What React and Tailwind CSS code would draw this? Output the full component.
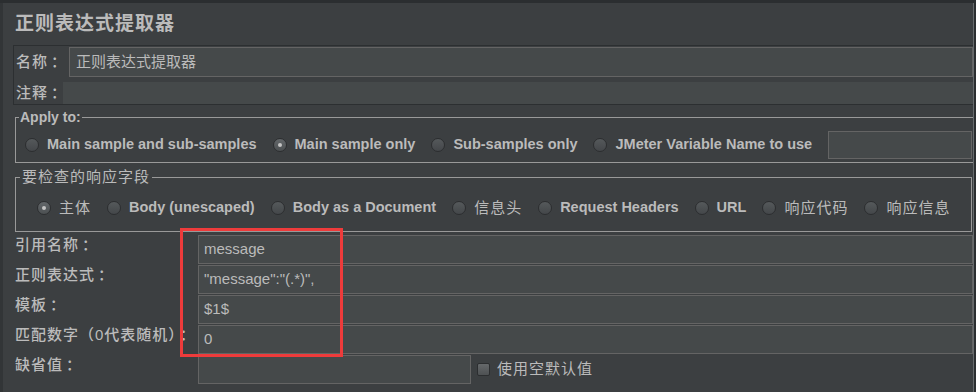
import React from "react";

const cjk = "font-['Liberation_Sans','Noto_Sans_CJK_SC',sans-serif]";

const Radio = ({ label, checked, cn }) => (
  <span className="flex items-center whitespace-nowrap">
    <span
      className={`flex items-center justify-center w-[14px] h-[14px] rounded-full border border-[#2c2e30] bg-gradient-to-b ${
        checked ? "from-[#63676a] to-[#4c5052]" : "from-[#55595b] to-[#44474a]"
      }`}
    >
      {checked && <span className="w-[4px] h-[4px] rounded-full bg-[#c4c4c4]" />}
    </span>
    <span className={`ml-[8px] ${cn ? "text-[15px] tracking-[1px] font-normal" : "text-[14.5px] font-bold"}`}>
      {label}
    </span>
  </span>
);

// label text with the full-width colon pushed right, like the Swing font does
const Label = ({ text }) => (
  <>
    {text}
    <span className="ml-[3px]">：</span>
  </>
);

const FormRow = ({ label, value, children }) => (
  <div className="flex h-[29px] items-start">
    <div className="w-[183px] pt-[2px] leading-[16px] text-[15px] tracking-[1px] font-medium whitespace-nowrap">
      <Label text={label} />
    </div>
    {children || (
      <div className="w-[775px] h-[29px] flex items-center px-[5px] border border-[#646464] bg-[#45494a] text-[15px] font-['Liberation_Sans',sans-serif]">
        {value}
      </div>
    )}
  </div>
);

const App = () => {
  const applyTo = [
    { label: "Main sample and sub-samples" },
    { label: "Main sample only", checked: true },
    { label: "Sub-samples only" },
    { label: "JMeter Variable Name to use" },
  ];

  const fields = [
    { label: "主体", checked: true, cn: true },
    { label: "Body (unescaped)" },
    { label: "Body as a Document" },
    { label: "信息头", cn: true },
    { label: "Request Headers" },
    { label: "URL" },
    { label: "响应代码", cn: true },
    { label: "响应信息", cn: true },
  ];

  return (
    <div className={`relative w-[976px] h-[392px] overflow-hidden bg-[#3c3f41] text-[#bbbbbb] flex flex-col ${cjk}`}>
      <div className="h-[3px] bg-[#2b2e30]" />
      <div className="flex flex-1">
        <div className="w-[3px] bg-[#323537]" />

        <div className="w-[970px] flex flex-col">
          {/* title */}
          <div className="h-[42px] flex items-center pl-[12px] text-[19px] tracking-[1px] font-bold">
            正则表达式提取器
          </div>

          {/* name / comment */}
          <div className="ml-[10px] border-l border-y border-[#2c2f31] pt-px">
            <div className="flex h-[30px] items-center">
              <div className="w-[55px] pl-[2px] text-[15px] tracking-[1px] font-medium whitespace-nowrap">
                <Label text="名称" />
              </div>
              <div className="flex-1 h-[30px] flex items-center px-[6px] border border-[#646464] bg-[#45494a] text-[15px]">
                正则表达式提取器
              </div>
            </div>
            <div className="flex h-[22px] items-center mt-[5px]">
              <div className="w-[49px] pl-[2px] text-[15px] tracking-[1px] font-medium whitespace-nowrap">
                <Label text="注释" />
              </div>
              <div className="flex-1 h-[22px] bg-[#45494a]" />
            </div>
          </div>

          {/* apply to */}
          <fieldset className="mt-[3px] ml-[12px] mr-px border border-[#999999]">
            <legend className="ml-[3px] px-px leading-[18px] text-[14px] font-bold">Apply to:</legend>
            <div className="flex items-center h-[28px] mt-[5px] mb-[3px] pl-[9px] gap-[16px]">
              {applyTo.map((r) => (
                <Radio key={r.label} {...r} />
              ))}
              <div className="ml-auto mr-[2px] w-[144px] h-[28px] border border-[#646464] bg-[#45494a]" />
            </div>
          </fieldset>

          {/* response field */}
          <fieldset className="mt-[5px] ml-[12px] mr-px border border-[#999999]">
            <legend className="ml-[4px] px-[2px] leading-[18px] text-[15px] tracking-[1px]">要检查的响应字段</legend>
            <div className="flex items-center h-[28px] mt-[8px] mb-[9px] pl-[21px] gap-[16px]">
              {fields.map((r) => (
                <Radio key={r.label} {...r} />
              ))}
            </div>
          </fieldset>

          {/* extractor settings */}
          <div className="mt-[3px] ml-[12px] flex flex-col gap-px">
            <FormRow label="引用名称" value="message" />
            <FormRow label="正则表达式" value={'"message":"(.*)",'} />
            <FormRow label="模板" value="$1$" />
            <FormRow label="匹配数字（0代表随机）" value="0" />
            <FormRow label="缺省值">
              <div className="flex items-center h-[29px]">
                <div className="w-[273px] h-[29px] border border-[#646464] bg-[#45494a]" />
                <div className="ml-[6px] w-[13px] h-[13px] rounded-[2px] border border-[#2c2e30] bg-gradient-to-b from-[#65686a] to-[#4e5153]" />
                <span className="ml-[7px] text-[15px] tracking-[1px]">使用空默认值</span>
              </div>
            </FormRow>
          </div>
        </div>

        <div className="w-px bg-[#666a6c]" />
        <div className="flex-1 bg-[#2b2e30]" />
      </div>

      {/* highlight box */}
      <div className="absolute left-[180px] top-[228px] w-[163px] h-[129px] border-[3px] border-[#ee3b3b]" />
    </div>
  );
};

export default App;
